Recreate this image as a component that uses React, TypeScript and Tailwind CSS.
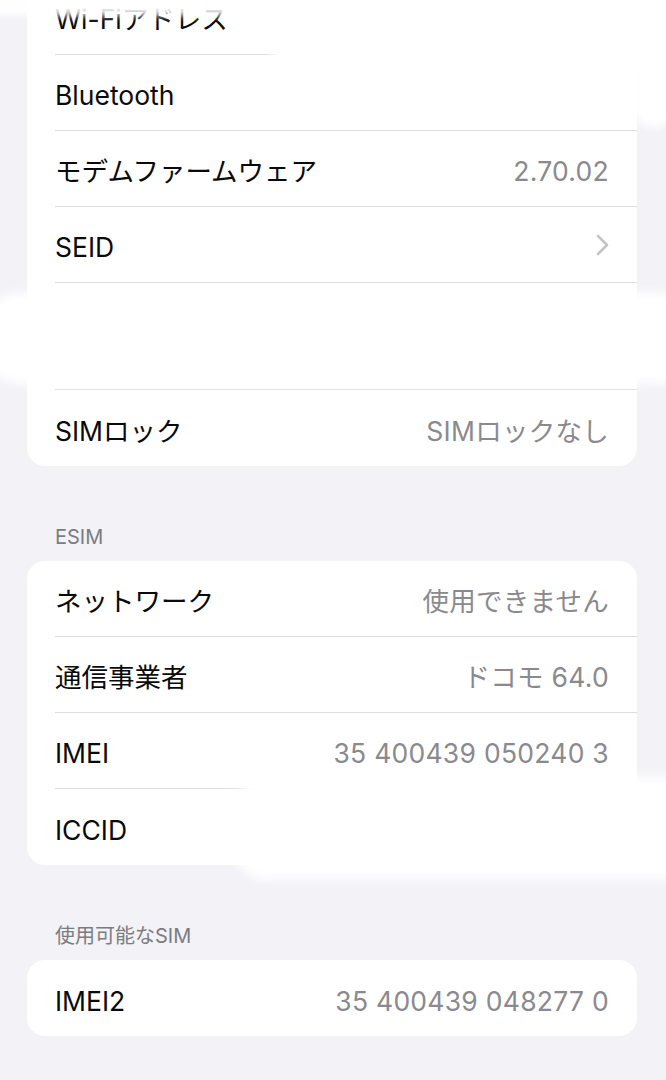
import React from "react";

type Row = { label: string; value?: string; chevron?: boolean; height?: number };

const FONT = { fontFamily: 'Inter, "Noto Sans CJK JP", sans-serif' };

function Chevron() {
  return (
    <svg width="13" height="22" viewBox="0 0 13 22" fill="none" className="-mt-[6px]">
      <path d="M2 2 L11 11 L2 20" stroke="#c4c4c8" strokeWidth="2.6" strokeLinecap="round" strokeLinejoin="round" />
    </svg>
  );
}

function Card({ rows }: { rows: Row[] }) {
  return (
    <div className="ml-[27px] mr-[29px] bg-white rounded-[18px] overflow-hidden">
      {rows.map((r, i) => {
        const last = i === rows.length - 1;
        return (
          <div key={i} className="pl-[28px]">
            <div
              className={
                "flex items-center justify-between pr-[28px] pt-[6px] " +
                (last ? "" : "border-b border-[#dededf]")
              }
              style={{ height: r.height ?? 76 }}
            >
              <span className="text-[26.5px] text-[#0a0a0a] leading-none">{r.label}</span>
              {r.value && (
                <span className="text-[26.5px] text-[#8a8a8e] leading-none tracking-[0.01em]">{r.value}</span>
              )}
              {r.chevron && <Chevron />}
            </div>
          </div>
        );
      })}
    </div>
  );
}

function Section({ title, rows }: { title: string; rows: Row[] }) {
  return (
    <div className="flex flex-col gap-[12px]">
      <div className="pl-[55px] text-[20px] leading-[24px] text-[#7c7c80]">{title}</div>
      <Card rows={rows} />
    </div>
  );
}

export default function App() {
  return (
    <div className="relative w-[666px] h-[1080px] overflow-hidden bg-[#f2f2f7]" style={FONT}>
      <div className="flex flex-col gap-[59px] mt-[-21px]">
        <Card
          rows={[
            { label: "Wi-Fiアドレス" },
            { label: "Bluetooth" },
            { label: "モデムファームウェア", value: "2.70.02" },
            { label: "SEID", chevron: true },
            { label: "", height: 107 },
            { label: "SIMロック", value: "SIMロックなし" },
          ]}
        />
        <Section
          title="ESIM"
          rows={[
            { label: "ネットワーク", value: "使用できません" },
            { label: "通信事業者", value: "ドコモ 64.0" },
            { label: "IMEI", value: "35 400439 050240 3" },
            { label: "ICCID" },
          ]}
        />
        <Section title="使用可能なSIM" rows={[{ label: "IMEI2", value: "35 400439 048277 0" }]} />
      </div>

      {/* redaction smudges */}
      <div className="absolute left-[-10px] top-[-10px] w-[290px] h-[26px] bg-white/90 blur-[3px]" />
      <div className="absolute left-[272px] top-[-30px] w-[440px] h-[92px] bg-white blur-[4px]" />
      <div className="absolute right-[-10px] top-[-10px] w-[44px] h-[138px] bg-white blur-[5px] rounded-full" />
      <div className="absolute left-[-20px] top-[292px] w-[720px] h-[92px] bg-white blur-[6px] rounded-[40px]" />
      <div className="absolute left-[235px] top-[776px] w-[470px] h-[104px] bg-white blur-[6px] rounded-[30px]" />
    </div>
  );
}
